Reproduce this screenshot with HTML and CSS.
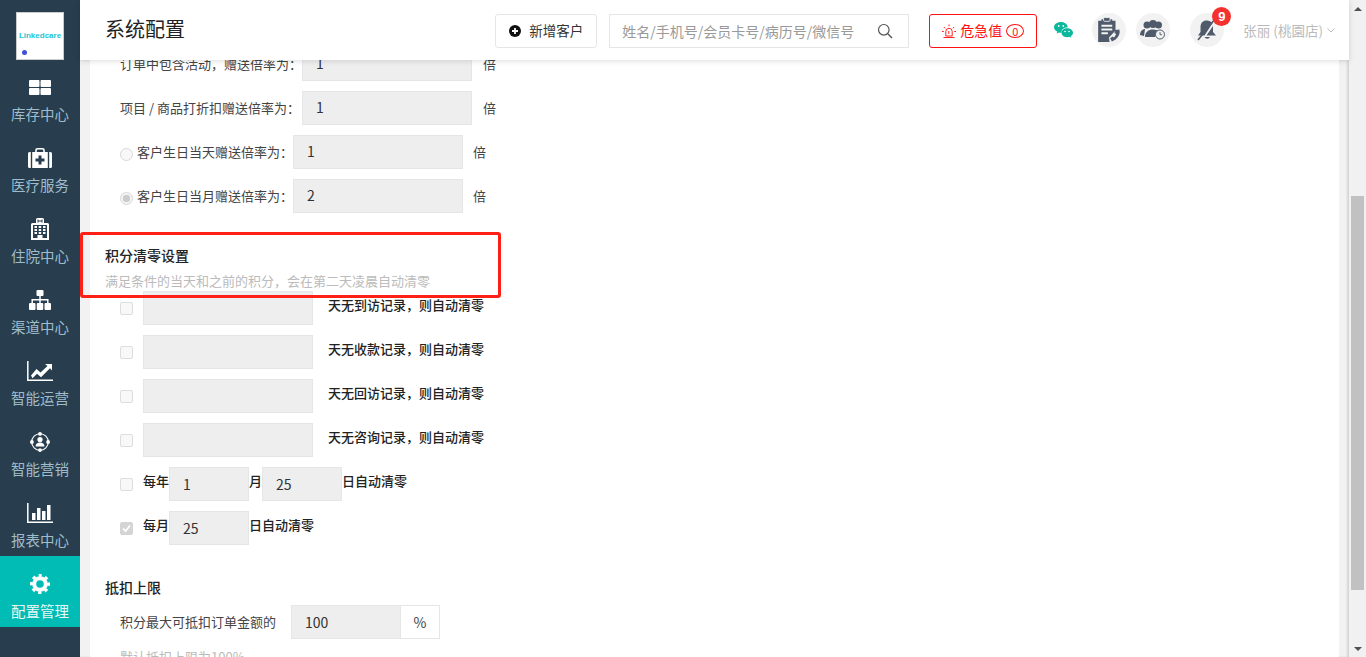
FILE: index.html
```html
<!DOCTYPE html>
<html lang="zh-CN">
<head>
<meta charset="utf-8">
<title>系统配置</title>
<link rel="stylesheet" href="styles.css">
</head>
<body>
<aside class="sidebar">
  <div class="logo"><span class="logo-text">Linkedcare</span><span class="logo-dot"></span></div>
  <nav class="nav">
    <a class="nav-item">
      <span class="nav-icon"><svg width="22" height="15" viewBox="0 0 22 15"><g fill="#fff"><rect width="10.5" height="7" rx="1"/><rect x="11.5" width="10.5" height="7" rx="1"/><rect y="8" width="10.5" height="7" rx="1"/><rect x="11.5" y="8" width="10.5" height="7" rx="1"/></g></svg></span>
      <span>库存中心</span>
    </a>
    <a class="nav-item">
      <span class="nav-icon"><svg width="24" height="20" viewBox="0 0 24 20"><path d="M8 4V2.2A1.4 1.4 0 0 1 9.4.8h5.2A1.4 1.4 0 0 1 16 2.2V4" fill="none" stroke="#fff" stroke-width="1.6"/><g fill="#fff"><path d="M2.8 4v16H1.6A1.6 1.6 0 0 1 0 18.400V5.600A1.600 1.600 0 0 1 1.600 4z"/><rect x="4.200" y="4" width="15.600" height="16"/><path d="M21.200 4v16h1.200a1.600 1.600 0 0 0 1.600-1.600V5.600A1.600 1.600 0 0 0 22.400 4z"/></g><path d="M10.500 7.500h3v3h3v3h-3v3h-3v-3h-3v-3h3z" fill="#283e4e"/></svg></span>
      <span>医疗服务</span>
    </a>
    <a class="nav-item">
      <span class="nav-icon"><svg width="18" height="22" viewBox="0 0 18 22"><path d="M5 5V1.500A1.500 1.500 0 0 1 6.500 0h5A1.500 1.500 0 0 1 13 1.500V5h3.500A1.500 1.500 0 0 1 18 6.500V22H0V6.500A1.500 1.500 0 0 1 1.500 5z" fill="#fff"/><path d="M7 1.500v3M11 1.500v3M7 3h4" stroke="#283e4e" stroke-width="1"/><path d="M2 7h14v13h-4.500v-3h-5v3H2z" fill="#283e4e"/><g fill="#fff"><rect x="3.500" y="8" width="2.500" height="2"/><rect x="7.700" y="8" width="2.500" height="2"/><rect x="12" y="8" width="2.500" height="2"/><rect x="3.500" y="11" width="2.500" height="2"/><rect x="7.700" y="11" width="2.500" height="2"/><rect x="12" y="11" width="2.500" height="2"/><rect x="3.500" y="14" width="2.500" height="2"/><rect x="7.700" y="14" width="2.500" height="2"/><rect x="12" y="14" width="2.500" height="2"/></g></svg></span>
      <span>住院中心</span>
    </a>
    <a class="nav-item">
      <span class="nav-icon"><svg width="22" height="20" viewBox="0 0 22 20"><g fill="#fff"><rect x="7.500" width="7" height="6" rx="1"/><rect y="13" width="6.500" height="7" rx="1"/><rect x="7.750" y="13" width="6.500" height="7" rx="1"/><rect x="15.500" y="13" width="6.500" height="7" rx="1"/></g><path d="M11 6v7M3.200 13v-3.300h15.600V13" fill="none" stroke="#fff" stroke-width="1.500"/></svg></span>
      <span>渠道中心</span>
    </a>
    <a class="nav-item">
      <span class="nav-icon"><svg width="26" height="20" viewBox="0 0 26 20"><path d="M.8 0v19.200H26" fill="none" stroke="#fff" stroke-width="1.500"/><path d="M4 14.500l5.500-6.500 4 3.500L20.500 5 18 3h7v6.500l-2-2.200-9 9-4-3.500-4.500 4.500z" fill="#fff"/></svg></span>
      <span>智能运营</span>
    </a>
    <a class="nav-item">
      <span class="nav-icon"><svg width="20" height="20" viewBox="0 0 20 20"><circle cx="10" cy="10" r="8.300" fill="none" stroke="#fff" stroke-width="1.100"/><g fill="#fff"><circle cx="10" cy="1.900" r="1.900"/><circle cx="1.900" cy="10" r="1.900"/><circle cx="18.100" cy="10" r="1.900"/><circle cx="10" cy="18.100" r="1.900"/><circle cx="10" cy="7.600" r="2.600"/><path d="M5.500 14.500c0-2.700 2-4 4.500-4s4.500 1.300 4.500 4z"/></g></svg></span>
      <span>智能营销</span>
    </a>
    <a class="nav-item">
      <span class="nav-icon"><svg width="26" height="20" viewBox="0 0 26 20"><path d="M.8 0v19.200H26" fill="none" stroke="#fff" stroke-width="1.500"/><g fill="#fff"><rect x="5" y="10" width="3.500" height="7"/><rect x="10" y="5" width="3.500" height="12"/><rect x="15" y="8" width="3.500" height="9"/><rect x="20" y="2" width="3.500" height="15"/></g></svg></span>
      <span>报表中心</span>
    </a>
    <a class="nav-item active">
      <span class="nav-icon"><svg width="20" height="20" viewBox="0 0 20 20"><circle cx="10" cy="10" r="5.800" fill="none" stroke="#fff" stroke-width="4"/><circle cx="10" cy="10" r="8.500" fill="none" stroke="#fff" stroke-width="3" stroke-dasharray="3.300 3.376" stroke-dashoffset="1.650" transform="rotate(-90 10 10)"/></svg></span>
      <span>配置管理</span>
    </a>
  </nav>
</aside>

<div class="main">
  <header class="topbar">
    <h1 class="page-title">系统配置</h1>
    <button class="add-btn" type="button"><svg width="12" height="12" viewBox="0 0 12 12"><circle cx="6" cy="6" r="6" fill="#111"/><path d="M6 3v6M3 6h6" stroke="#fff" stroke-width="1.800"/></svg><span class="btn-text">新增客户</span></button>
    <div class="search">
      <input class="search-input" type="text" placeholder="姓名/手机号/会员卡号/病历号/微信号">
      <svg width="16" height="16" viewBox="0 0 16 16"><circle cx="6.800" cy="6.800" r="5.300" fill="none" stroke="#555" stroke-width="1.200"/><path d="M10.800 10.800l4.200 4.200" stroke="#555" stroke-width="1.400"/></svg>
    </div>
    <button class="alert-btn" type="button">
      <svg width="14" height="15" viewBox="0 0 14 15"><path d="M3.800 12V7.500a3.200 3.200 0 0 1 6.400 0V12zM1.500 13.500h11M7 .5v1.800M1.800 3l1.300 1.300M12.200 3l-1.300 1.300M0 7.500h1.800M12.200 7.500H14M6.800 7v3" fill="none" stroke="#f22" stroke-width="1"/></svg>
      <span class="btn-text">危急值</span><span class="alert-count">0</span>
    </button>
    <svg class="wechat" width="19" height="16" viewBox="0 0 19 16"><path d="M7 0c3.700 0 6.700 2.400 6.700 5.300 0 .1 0 .2 0 .3-3-.4-6.200 1.500-6.200 4.300 0 .3 0 .6.100.8H7c-.7 0-1.300-.1-2-.3L2.700 11.500l.5-1.900C1.300 8.600 0 7.100 0 5.300 0 2.400 3.100 0 7 0z" fill="#0bb89c"/><path d="M13 6.300c3.300 0 6 2 6 4.500 0 1.400-.9 2.600-2.200 3.500l.4 1.500-1.800-1c-.8.200-1.600.4-2.400.4-3.300 0-5.500-2-5.500-4.400s2.200-4.500 5.500-4.500z" fill="#0bb89c"/><g fill="#fff"><circle cx="4.700" cy="4" r=".9"/><circle cx="9.300" cy="4" r=".9"/><circle cx="11" cy="9.500" r=".8"/><circle cx="15" cy="9.500" r=".8"/></g></svg>
    <span class="round-icon first-round"><svg width="24" height="26" viewBox="0 0 22 24"><path d="M1 3.500h3V2h10v1.500h3v9l-6 6.500 .5 4H1z" fill="#4f5a6a"/><rect x="6" y=".5" width="6" height="3.500" rx="1" fill="#4f5a6a" stroke="#f2f2f2" stroke-width=".8"/><path d="M4 8h10M4 11.500h10M4 15h6" stroke="#f2f2f2" stroke-width="1.800"/><path d="M20.500 11.500c1.500 4-1.800 9.500-6.800 11l-1.700-3 2.300-1.500 1.200 1c1-1 1.800-2.300 2-3.600l-1.500-.5.700-3z" fill="#4f5a6a"/></svg></span>
    <span class="round-icon"><svg width="26" height="20" viewBox="0 0 26 20"><g fill="#4f5a6a"><circle cx="7" cy="5" r="3.500"/><circle cx="13" cy="4" r="4"/><circle cx="18.500" cy="5" r="3.500"/><path d="M0 15c0-4 3-6 5-6l-1 7z"/><path d="M5 17c0-5 3.500-7.500 8-7.500 3 0 5.500 1 6.800 3A6 6 0 0 0 15 17z"/></g><circle cx="20" cy="14.500" r="4.500" fill="#f2f2f2" stroke="#4f5a6a" stroke-width="1"/><path d="M20 12v2.700h2.200" fill="none" stroke="#4f5a6a" stroke-width=".9"/></svg></span>
    <span class="round-icon bell"><svg width="22" height="24" viewBox="0 0 22 24"><path d="M10 2.500c-4 .6-5.500 3.300-5.500 7V14L2 17.500h6.500L16.500 5C15 3.500 13 2.500 11 2.500z" fill="#4f5a6a"/><path d="M17 8v6l3 3.500H10.500z" fill="#4f5a6a"/><path d="M8.500 19a3 3 0 0 0 5.500 0z" fill="#4f5a6a"/><path d="M2 22L19 1" stroke="#4f5a6a" stroke-width="1.600"/></svg><b class="badge">9</b></span>
    <span class="user">张丽 (桃園店)<svg width="8" height="5" viewBox="0 0 8 5"><path d="M.5.500L4 4 7.500.500" fill="none" stroke="#bbb" stroke-width="1"/></svg></span>
  </header>

  <div class="content">
    <div class="panel">
      <div class="row row-first">
        <span class="label label-wide">订单中包含活动，赠送倍率为：</span><input class="field w170" value="1" disabled><span class="unit">倍</span>
      </div>
      <div class="row">
        <span class="label label-wide">项目 / 商品打折扣赠送倍率为：</span><input class="field w170" value="1" disabled><span class="unit">倍</span>
      </div>
      <div class="row">
        <span class="radio"></span><span class="label label-radio">客户生日当天赠送倍率为：</span><input class="field w170" value="1" disabled><span class="unit unit-near">倍</span>
      </div>
      <div class="row">
        <span class="radio checked"></span><span class="label label-radio">客户生日当月赠送倍率为：</span><input class="field w170" value="2" disabled><span class="unit unit-near">倍</span>
      </div>

      <h2 class="section-title">积分清零设置</h2>
      <p class="section-sub">满足条件的当天和之前的积分，会在第二天凌晨自动清零</p>
      <div class="row"><span class="check"></span><input class="field w170" disabled><span class="strong after-field">天无到访记录，则自动清零</span></div>
      <div class="row"><span class="check"></span><input class="field w170" disabled><span class="strong after-field">天无收款记录，则自动清零</span></div>
      <div class="row"><span class="check"></span><input class="field w170" disabled><span class="strong after-field">天无回访记录，则自动清零</span></div>
      <div class="row"><span class="check"></span><input class="field w170" disabled><span class="strong after-field">天无咨询记录，则自动清零</span></div>
      <div class="row"><span class="check"></span><span class="strong">每年</span><input class="field w80" value="1" disabled><span class="strong">月</span><input class="field w80" value="25" disabled><span class="strong">日自动清零</span></div>
      <div class="row"><span class="check checked"><svg width="13" height="13" viewBox="0 0 13 13"><path d="M3 6.500l2.500 2.700L10 3.500" fill="none" stroke="#fff" stroke-width="1.800"/></svg></span><span class="strong">每月</span><input class="field w80" value="25" disabled><span class="strong">日自动清零</span></div>

      <h2 class="section-title">抵扣上限</h2>
      <div class="row row-limit">
        <span class="label label-limit">积分最大可抵扣订单金额的</span><input class="field w110" value="100" disabled><span class="suffix">%</span>
      </div>
      <p class="hint">默认抵扣上限为100%</p>
    </div>
  </div>
  <div class="annotation"></div>
</div>

<div class="scrollbar">
  <span class="arrow up"></span>
  <span class="thumb"></span>
  <span class="arrow down"></span>
</div>
</body>
</html>
```

FILE: styles.css
```css
* { box-sizing: border-box; }
html, body { height: 100%; }
body {
  margin: 0;
  height: 657px;
  display: flex;
  overflow: hidden;
  font-family: "Noto Sans CJK SC", "Liberation Sans", sans-serif;
  font-size: 13px;
  color: #333;
  background: #f2f2f2;
}

/* sidebar */
.sidebar { width: 80px; flex: none; background: #283e4e; padding-top: 12px; }
.logo {
  width: 48px; height: 48px; margin: 0 auto;
  background: #fff; box-shadow: inset 0 0 0 1px #ccc;
  display: flex; flex-direction: column; align-items: center;
  padding-top: 19px;
}
.logo-text { font: bold 8px/10px "Liberation Sans", sans-serif; color: #19c6d8; white-space: nowrap; }
.logo-dot { width: 5px; height: 5px; border-radius: 50%; background: #3f51d8; align-self: flex-start; margin: 9px 0 0 6px; }
.nav { margin-top: -1px; }
.nav-item {
  height: 71px; display: flex; flex-direction: column; align-items: center;
  font-size: 14.500px; line-height: 20px; color: #9fbccb; white-space: nowrap;
}
.nav-icon { height: 45px; display: flex; align-items: center; justify-content: center; padding-top: 11px; }
.nav-item.active { background: #00bcb4; color: #e8f8f6; }

/* main column */
.main { flex: 1; min-width: 0; display: flex; flex-direction: column; position: relative; }
.topbar {
  height: 60px; flex: none; background: #fff; display: flex; align-items: center;
  padding-left: 25px; position: relative; z-index: 2;
  box-shadow: 0 1px 6px rgba(0, 0, 0, .14);
}
.page-title { margin: 0 auto 2px 0; font-size: 20px; font-weight: 400; color: #222; line-height: 28px; }
.add-btn {
  width: 102px; height: 34px; margin-top: 2px; display: flex; align-items: center; justify-content: center; gap: 8px;
  background: #fff; border: 1px solid #e6e6e6; border-radius: 3px; padding: 0;
  font: inherit; font-size: 13.500px; color: #333;
}
.btn-text { position: relative; top: -1px; }
.search {
  width: 300px; height: 34px; margin: 2px 0 0 12px; display: flex; align-items: center;
  border: 1px solid #e6e6e6; padding: 0 15px 0 12px;
}
.search-input { flex: 1; min-width: 0; border: 0; padding: 0; outline: 0; font: inherit; font-size: 14px; }
.search-input::placeholder { color: #999; opacity: 1; }
.alert-btn {
  width: 108px; height: 34px; margin: 2px 0 0 20px; display: flex; align-items: center; justify-content: center; gap: 4px;
  background: #fff; border: 1px solid #f11; border-radius: 3px; padding: 0;
  font: inherit; font-size: 14px; color: #f11;
}
.alert-count {
  width: 18px; height: 14px; border: 1px solid #f11; border-radius: 50%;
  font-size: 11px; line-height: 12px; text-align: center;
}
.wechat { margin-left: 17px; flex: none; }
.round-icon {
  width: 34px; height: 34px; border-radius: 50%; background: #f2f2f2; margin-left: 10px;
  display: flex; align-items: center; justify-content: center; position: relative; flex: none;
}
.first-round { margin-left: 19px; }
.bell { margin-left: 20px; }
.badge {
  position: absolute; left: 22px; top: -6px; width: 19px; height: 19px; border-radius: 50%;
  background: #f5312f; color: #fff; font: bold 13px/19px "Liberation Sans", sans-serif; text-align: center;
}
.user {
  margin: 0 14px 0 19px; color: #bbb; font-size: 13.500px; display: flex; align-items: center; gap: 4px; white-space: nowrap;
}

/* content */
.content { flex: 1; min-height: 0; overflow: hidden; padding: 0 10px; box-shadow: inset -2px 0 2px rgba(0, 0, 0, .12); }
.panel { background: #fff; height: 100%; padding-left: 30px; display: flow-root; }
.row { display: flex; align-items: center; height: 34px; margin-bottom: 10px; }
.row-first { margin-top: -13px; }
.label { color: #444; white-space: nowrap; flex: none; position: relative; top: -1px; }
.label-wide { width: 182px; }
.label-radio { width: 156px; }
.label-limit { width: 171px; }
.field {
  height: 34px; background: #eee; border: 1px solid #e6e6e6; padding: 0 13px;
  font: inherit; font-size: 14px; color: #333; flex: none; outline: 0; opacity: 1;
}
.w170 { width: 170px; }
.w110 { width: 110px; }
.w80 { width: 80px; padding-bottom: 0; }
.w170 { padding-bottom: 2px; }
.unit { margin-left: 11px; color: #444; position: relative; top: -1px; }
.unit-near { margin-left: 10px; }
.suffix {
  width: 39px; height: 34px; border: 1px solid #e6e6e6; border-left: 0;
  display: flex; align-items: center; justify-content: center; font-size: 14px; color: #444;
}
.radio {
  width: 13px; height: 13px; border-radius: 50%; border: 1px solid #d8d8d8; background: #f8f8f8;
  margin-right: 4px; flex: none; position: relative; top: 2px;
}
.radio.checked { background: radial-gradient(circle, #ccc 0 3.500px, #f4f4f4 4px); }
.check {
  width: 13px; height: 13px; border-radius: 2px; border: 1px solid #ddd; background: #f8f8f8;
  margin-right: 10px; flex: none; display: flex;
}
.check.checked { background: #d4d4d4; border-color: #d4d4d4; }
.check.checked svg { margin: -1px; flex: none; }
.strong { color: #222; font-weight: 500; white-space: nowrap; position: relative; top: -4px; }
.after-field { margin-left: 15px; }
.section-title { margin: 32px 0 0 -15px; font-size: 14px; line-height: 20px; font-weight: 500; color: #222; }
.section-sub { margin: 7px 0 0 -15px; font-size: 13px; line-height: 18px; color: #bbb; height: 19px; }
.row-limit { margin-top: 8px; }
.hint { margin: 0; color: #bbb; font-size: 13px; line-height: 16px; }

/* annotation frame drawn over the page */
.annotation {
  position: absolute; left: 0; top: 232px; width: 421px; height: 66px;
  border: 3px solid #ff2015; border-radius: 3px; z-index: 3;
}

/* scrollbar */
.scrollbar { width: 17px; flex: none; background: #f1f1f1; display: flex; flex-direction: column; align-items: center; }
.arrow { width: 0; height: 0; border-left: 4px solid transparent; border-right: 4px solid transparent; }
.up { border-bottom: 4px solid #505050; margin-top: 7px; }
.down { border-top: 4px solid #505050; margin: auto 0 6px; }
.thumb { width: 13px; height: 394px; background: #c1c1c1; margin-top: 185px; }
```
